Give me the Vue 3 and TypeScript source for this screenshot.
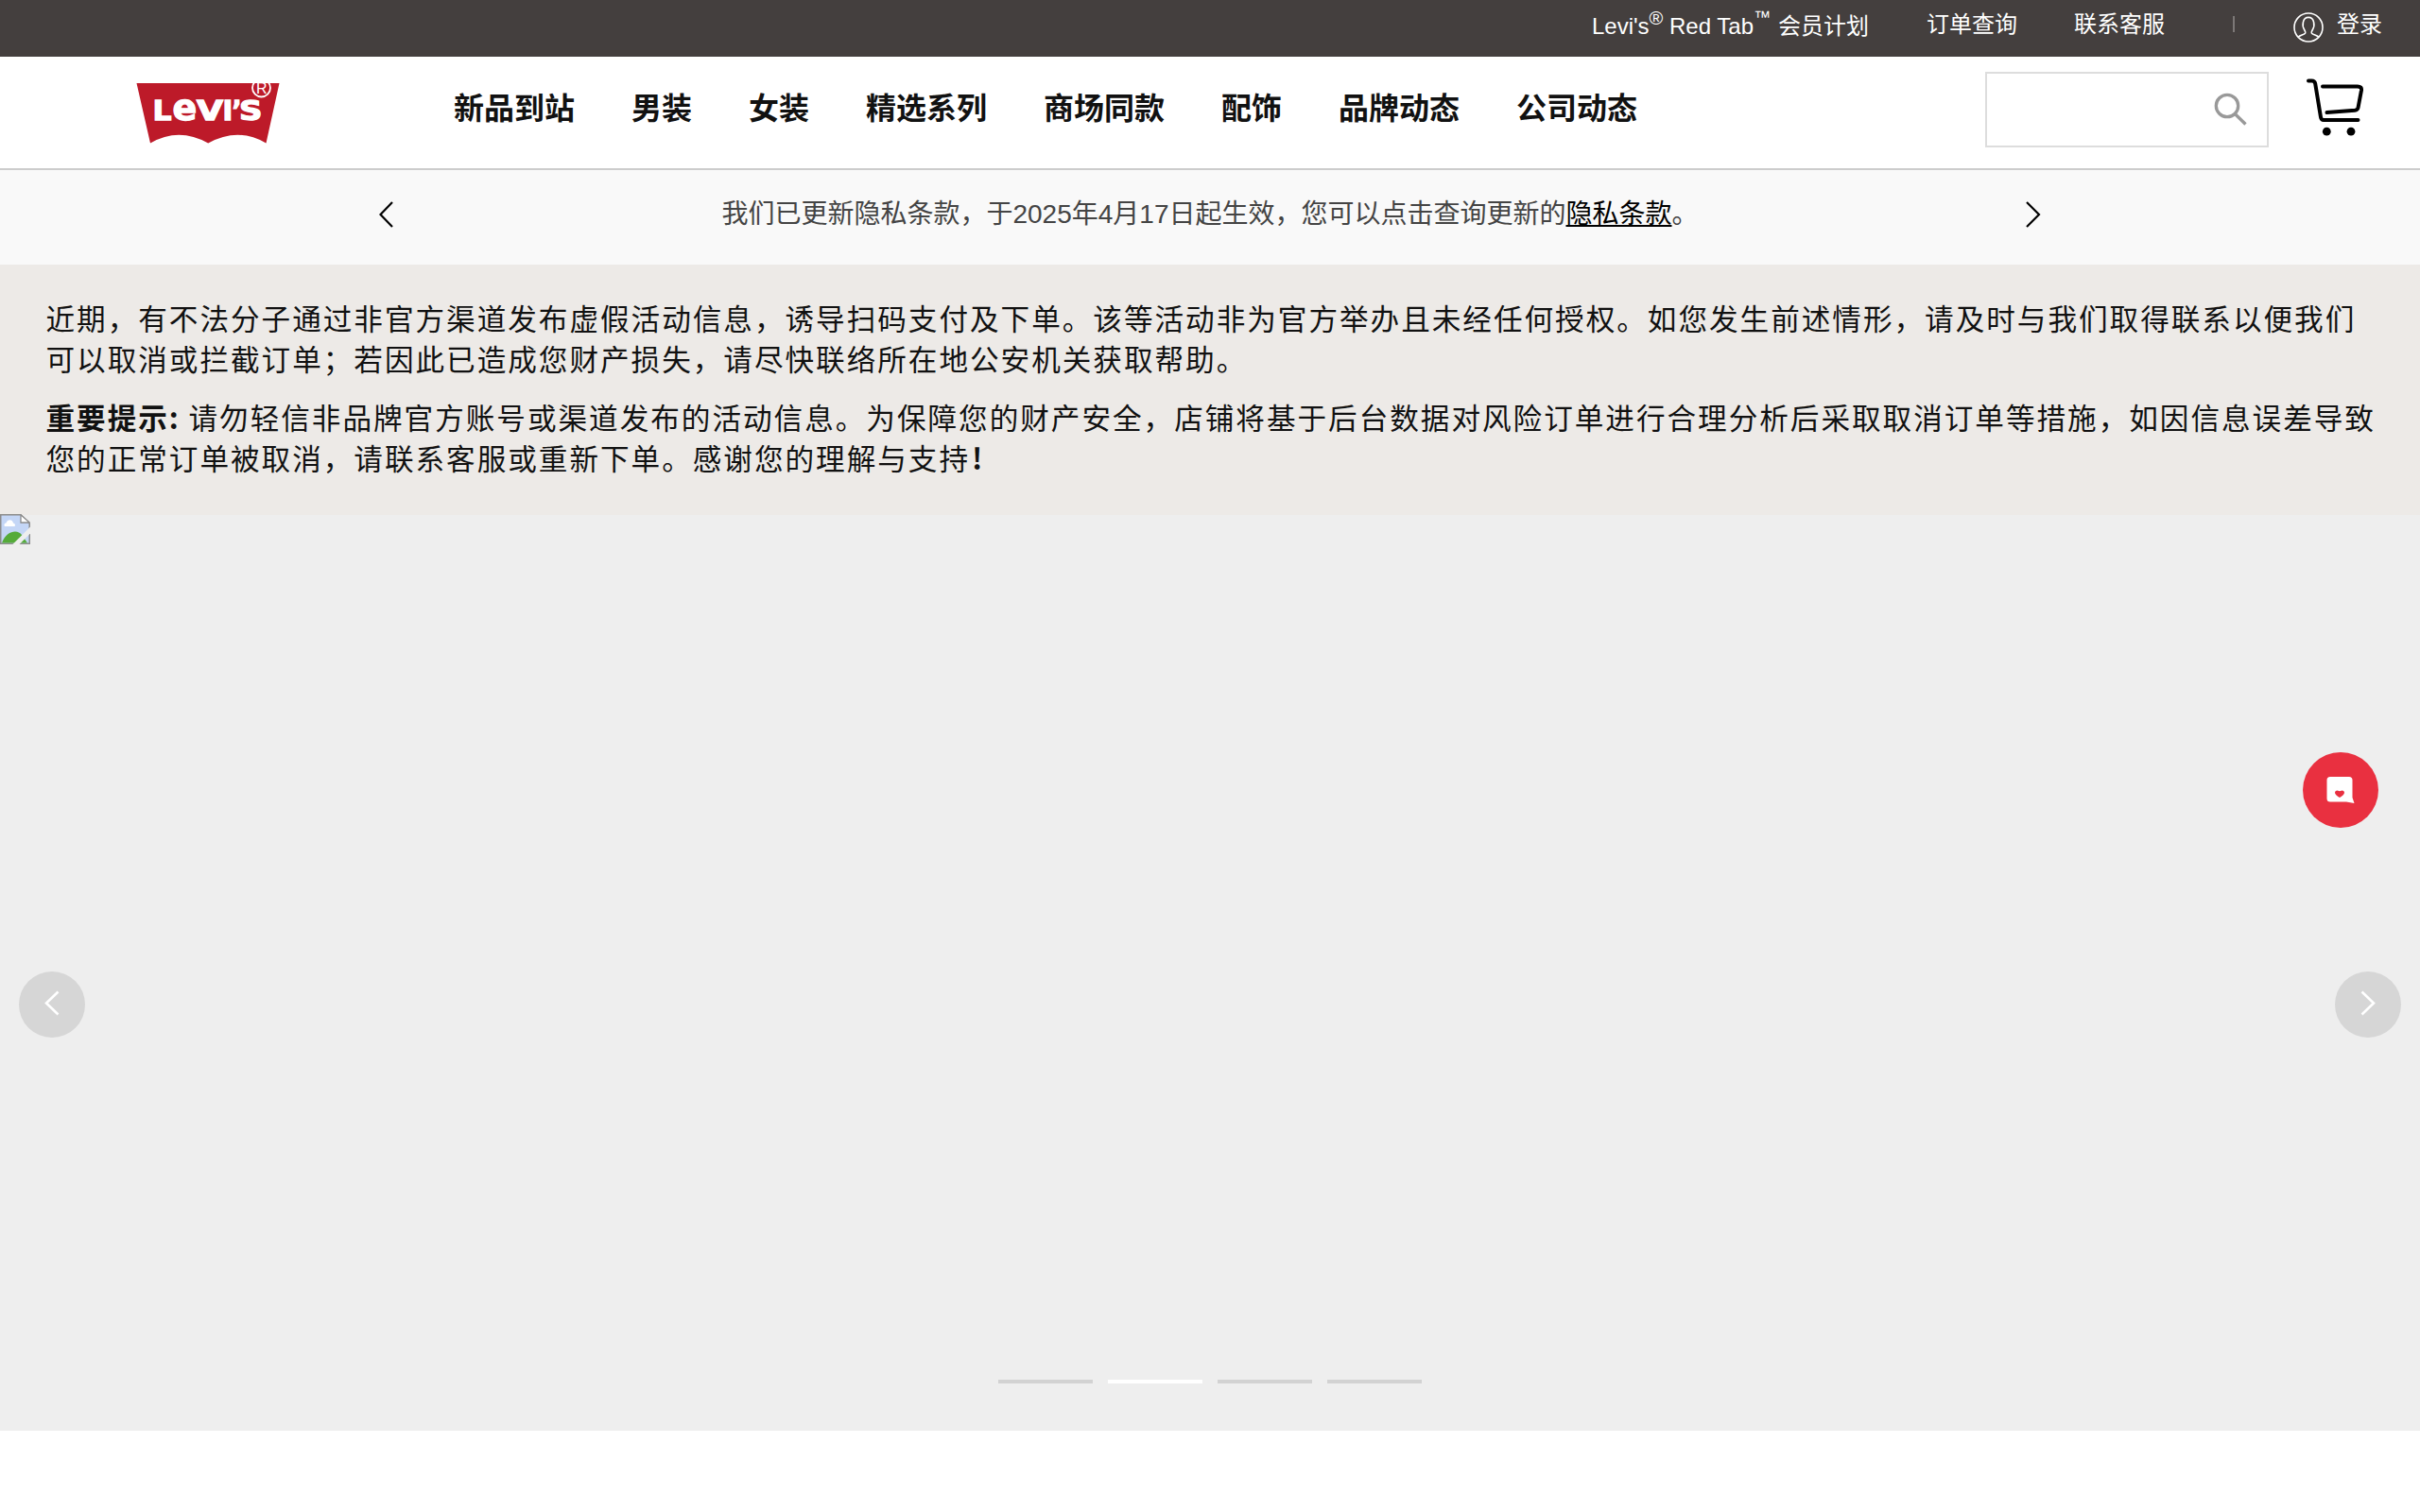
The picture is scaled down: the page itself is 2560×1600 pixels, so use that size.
<script setup lang="ts">
import { ref } from 'vue'

const navItems: string[] = ['新品到站', '男装', '女装', '精选系列', '商场同款', '配饰', '品牌动态', '公司动态']
const slideCount = 4
const activeSlide = ref(2)

function step(delta: number): void {
  activeSlide.value = ((activeSlide.value - 1 + delta + slideCount) % slideCount) + 1
}
</script>

<template>
  <div class="page">
    <div class="topbar">
      <a class="member">Levi's<span class="reg">®</span> Red Tab<span class="tm">™</span><span class="plan">会员计划</span></a>
      <a class="orders">订单查询</a>
      <a class="service">联系客服</a>
      <span class="divider"></span>
      <svg class="user" viewBox="0 0 32 32" fill="none" stroke="#fff" stroke-width="1.6">
        <circle cx="16" cy="16" r="15" />
        <path d="M5 26.500c1.500-2 6-2.600 7.500-4.200.8-1-.2-2.800-1.100-4.300-2-3.200-2.200-12.600 4.600-12.600s6.600 9.400 4.600 12.600c-.9 1.500-1.900 3.300-1.100 4.300 1.500 1.600 6 2.200 7.500 4.200" />
      </svg>
      <a class="login">登录</a>
    </div>

    <header class="header">
      <svg class="logo" viewBox="0 0 152 66">
        <path fill="#bd1a29" d="M-.5 0H150.500L136.500 63.500Q107 46 75.200 63.500Q44 46 14 63.500Z" />
        <g fill="#fff" stroke="#fff" stroke-width="1.300" font-family="'DejaVu Sans'" font-weight="700">
          <text x="16.500" y="38.500" font-size="29" textLength="20" lengthAdjust="spacingAndGlyphs">L</text>
          <text x="37.500" y="38.500" font-size="38">e</text>
          <text x="63" y="38.500" font-size="29" textLength="28" lengthAdjust="spacingAndGlyphs">V</text>
          <text x="90.500" y="38.500" font-size="29">I</text>
          <text x="100.500" y="38.500" font-size="29" textLength="10" lengthAdjust="spacingAndGlyphs">’</text>
          <text x="108" y="38.500" font-size="29" textLength="24.500" lengthAdjust="spacingAndGlyphs">S</text>
        </g>
        <circle cx="131.500" cy="5" r="9.500" fill="none" stroke="#fff" stroke-width="1.800" />
        <text x="126" y="11" font-size="16" fill="#fff" font-family="'Liberation Sans'">R</text>
      </svg>
      <nav class="nav">
        <a v-for="item in navItems" :key="item">{{ item }}</a>
      </nav>
      <div class="search">
        <svg viewBox="0 0 36 36" fill="none" stroke="#999" stroke-width="3.300">
          <circle cx="14" cy="14" r="11.700" />
          <path d="M22 22.300L33.500 33.500" />
        </svg>
      </div>
      <svg class="cart" viewBox="0 0 62 64" fill="none" stroke="#000" stroke-width="4" stroke-linecap="round" stroke-linejoin="round">
        <path d="M4 5.500H7.500Q10.500 5.500 11.200 8.500L17 44Q17.500 47 20 47H56.500" />
        <path d="M19 11.500H56Q60.500 11.500 60 15.500L56.500 34Q56 36.500 53 36.800L23.500 39" />
        <g fill="#000" stroke="none">
          <circle cx="23.300" cy="59.200" r="4.400" />
          <circle cx="49" cy="59.200" r="4.400" />
        </g>
      </svg>
    </header>

    <section class="notice">
      <svg viewBox="0 0 16 28"><path d="M14 1L1.500 14L14 27" /></svg>
      <p>我们已更新隐私条款，于2025年4月17日起生效，您可以点击查询更新的<a>隐私条款</a>。</p>
      <svg viewBox="0 0 16 28"><path d="M1 1L14 14L1 27" /></svg>
    </section>

    <section class="warning">
      <p>近期，有不法分子通过非官方渠道发布虚假活动信息，诱导扫码支付及下单。该等活动非为官方举办且未经任何授权。如您发生前述情形，请及时与我们取得联系以便我们<br>可以取消或拦截订单；若因此已造成您财产损失，请尽快联络所在地公安机关获取帮助。</p>
      <p><b class="lead">重要提示:</b>请勿轻信非品牌官方账号或渠道发布的活动信息。为保障您的财产安全，店铺将基于后台数据对风险订单进行合理分析后采取取消订单等措施，如因信息误差导致<br>您的正常订单被取消，请联系客服或重新下单。感谢您的理解与支持<b class="bang">!</b></p>
    </section>

    <section class="hero">
      <svg class="broken" viewBox="0 0 32 32">
        <path fill="#c4d6f6" stroke="#8c8c8c" stroke-width="1.500" d="M.75.75H22L31.250 10V31.250H.75Z" />
        <path fill="#fff" stroke="#8c8c8c" stroke-width="1.300" d="M22 .75V9H31.250Z" />
        <path fill="#fff" d="M5 13c-1.500-2 .5-3.600 1.500-3.500 1-4.500 7-4.500 7.500 0 2 .5 2.500 2.500 1.500 3.500Z" />
        <path fill="#55ab3a" d="M2 30.500C7 17 19 16 23 22L29 30.500Z" />
        <path stroke="#eee" stroke-width="5" d="M15 34L34 15" />
      </svg>
      <button class="arrow prev" @click="step(-1)">
        <svg viewBox="0 0 70 70"><path d="M41.500 21.500L29 33.500L41.500 45.500" /></svg>
      </button>
      <button class="arrow next" @click="step(1)">
        <svg viewBox="0 0 70 70"><path d="M28.500 21.500L41 33.500L28.500 45.500" /></svg>
      </button>
      <div class="dots">
        <i v-for="n in slideCount" :key="n" :class="{ on: n === activeSlide }"></i>
      </div>
    </section>

    <div class="chat">
      <svg viewBox="0 0 80 80">
        <path fill="#fff" d="M29 26H49Q52.500 26 52.500 29.500V48L54.500 54L46 52.500H29Q25.500 52.500 25.500 49V29.500Q25.500 26 29 26Z" />
        <path fill="#e93040" d="M34 43Q34 40.500 36.500 40.500L39 41.300L41.500 40.500Q44 40.500 44 43Q43.500 45.500 39 48Q34.500 45.500 34 43Z" />
      </svg>
    </div>
  </div>
</template>

<style>
body {
  margin: 0;
  background: #fff;
}
</style>

<style scoped>
.page {
  width: 2560px;
  height: 1600px;
  overflow: hidden;
  position: relative;
  background: #fff;
  font-family: "Liberation Sans", "Noto Sans CJK SC", sans-serif;
}
p {
  margin: 0;
}
svg {
  display: block;
  flex: none;
}
.topbar {
  box-sizing: border-box;
  height: 60px;
  padding-right: 40px;
  background: #443f3e;
  color: #fff;
  font-size: 24px;
  line-height: 52px;
  display: flex;
  justify-content: flex-end;
  white-space: nowrap;
}
.member {
  width: 295px;
  margin-right: 59px;
  padding-top: 2px;
}
.reg,
.tm {
  line-height: 0;
  vertical-align: 10px;
}
.reg {
  font-size: 20px;
}
.tm {
  font-size: 18px;
  vertical-align: 12px;
}
.plan {
  margin-left: 8px;
}
.orders {
  margin-right: 60px;
}
.divider {
  width: 2px;
  height: 17px;
  margin: 17px 62px 0 72px;
  background: #7c7877;
}
.user {
  width: 32px;
  height: 32px;
  margin: 13px 14px 0 0;
}
.header {
  box-sizing: border-box;
  height: 120px;
  border-bottom: 2px solid #ccc;
  display: flex;
  align-items: flex-start;
}
.logo {
  width: 152px;
  height: 66px;
  margin: 28px 0 0 145px;
  overflow: visible;
}
.nav {
  margin-left: 183px;
  display: flex;
  gap: 60px;
  font-size: 32px;
  font-weight: 700;
  line-height: 48px;
  padding-top: 31px;
  color: #111;
  white-space: nowrap;
}
.search {
  box-sizing: border-box;
  width: 300px;
  height: 80px;
  margin: 16px 0 0 auto;
  border: 2px solid #ddd;
  display: flex;
  justify-content: flex-end;
}
.search svg {
  width: 36px;
  height: 36px;
  margin: 20px 20px 0 0;
}
.cart {
  width: 62px;
  height: 64px;
  margin: 20px 60px 0 38px;
}
.notice {
  box-sizing: border-box;
  height: 100px;
  padding: 0 401px;
  background: #f9f9f9;
  display: flex;
  justify-content: space-between;
  align-items: flex-start;
  color: #444;
  font-size: 28px;
  line-height: 42px;
}
.notice p {
  margin-top: 26px;
}
.notice a {
  color: #000;
  text-decoration: underline;
  text-decoration-thickness: 2px;
  text-underline-offset: 2px;
}
.notice svg {
  width: 16px;
  height: 28px;
  margin-top: 33px;
  fill: none;
  stroke: #000;
  stroke-width: 2.2;
}
.warning {
  box-sizing: border-box;
  height: 265px;
  padding: 35px 0 0 48.5px;
  background: #edeae7;
  color: #111;
  font-family: "Noto Sans CJK SC", sans-serif;
  font-size: 30.6px;
  letter-spacing: 1.99px;
  line-height: 43px;
  white-space: nowrap;
  display: flex;
  flex-direction: column;
  gap: 19px;
}
.lead {
  display: inline-block;
  width: 151px;
}
.bang {
  margin-left: 2px;
}
.hero {
  position: relative;
  height: 969px;
  background: #eee;
}
.broken {
  width: 32px;
  height: 32px;
  position: relative;
  top: -1px;
}
.arrow {
  position: absolute;
  top: 483px;
  width: 70px;
  height: 70px;
  padding: 0;
  border: 0;
  border-radius: 50%;
  background: #d6d6d6;
}
.arrow svg {
  width: 70px;
  height: 70px;
  fill: none;
  stroke: #fff;
  stroke-width: 2.6;
}
.prev {
  left: 20px;
}
.next {
  right: 20px;
}
.dots {
  position: absolute;
  left: 0;
  right: 0;
  top: 915px;
  display: flex;
  justify-content: center;
  gap: 16px;
}
.dots i {
  width: 100px;
  height: 4px;
  background: #d2d2d2;
}
.dots i.on {
  background: #fff;
}
.chat {
  position: absolute;
  left: 2436px;
  top: 796px;
  width: 80px;
  height: 80px;
  border-radius: 50%;
  background: #e93040;
}
</style>
